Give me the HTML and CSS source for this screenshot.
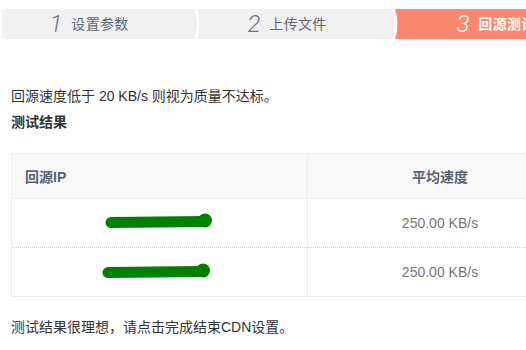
FILE: index.html
```html
<!DOCTYPE html>
<html lang="zh-CN">
<head>
<meta charset="utf-8">
<title>回源测试</title>
<link rel="stylesheet" href="styles.css">
</head>
<body>
<div class="steps">
  <div class="step step-first"><span class="num">1</span><span class="label">设置参数</span></div>
  <svg class="sep" width="6" height="30" viewBox="0 0 6 30" preserveAspectRatio="none"><path d="M0 0 Q6 15 0 30 Z" fill="#f0f0f0"/><path d="M3 0 Q8 15 3 30 L6 30 L6 0 Z" fill="#f0f0f0"/></svg>
  <div class="step"><span class="num">2</span><span class="label">上传文件</span></div>
  <svg class="sep" width="6" height="30" viewBox="0 0 6 30" preserveAspectRatio="none"><path d="M0 0 Q6 15 0 30 Z" fill="#f0f0f0"/><path d="M3 0 Q8 15 3 30 L6 30 L6 0 Z" fill="#f9886f"/></svg>
  <div class="step step-active"><span class="num">3</span><span class="label">回源测试</span></div>
</div>

<div class="content">
  <p class="note">回源速度低于 20 KB/s 则视为质量不达标。</p>
  <h3 class="title">测试结果</h3>
  <table class="result">
    <thead>
      <tr><th class="col-ip">回源IP</th><th class="col-speed">平均速度</th><th class="col-more"></th></tr>
    </thead>
    <tbody>
      <tr class="row-first">
        <td class="cell-ip"><svg class="mask" width="110" height="16" viewBox="0 0 110 16"><path d="M6 9.5 L100 8.5" stroke="#008000" stroke-width="11" stroke-linecap="round"/><circle cx="100" cy="7.5" r="7" fill="#008000"/></svg></td>
        <td class="cell-speed">250.00 KB/s</td><td class="cell-more"></td>
      </tr>
      <tr>
        <td class="cell-ip"><svg class="mask mask-2" width="110" height="16" viewBox="0 0 110 16"><path d="M6 9.5 L100 8.5" stroke="#008000" stroke-width="11" stroke-linecap="round"/><circle cx="101" cy="7.5" r="7" fill="#008000"/></svg></td>
        <td class="cell-speed">250.00 KB/s</td><td class="cell-more"></td>
      </tr>
    </tbody>
  </table>
  <p class="done">测试结果很理想，请点击完成结束<span class="cdn">CDN</span>设置。</p>
</div>
</body>
</html>
```

FILE: styles.css
```css
html, body {
  margin: 0;
  padding: 0;
  overflow: hidden;
  background: #fff;
}

body {
  width: 526px;
  font-family: "Liberation Sans", "Noto Sans CJK SC", sans-serif;
  font-size: 14px;
  color: #333;
}

.steps {
  display: flex;
  width: 640px;
  height: 30px;
  margin: 9px 0 0 2px;
}

.step {
  flex: 0 0 192px;
  height: 30px;
  background: #f0f0f0;
  display: flex;
  align-items: center;
  justify-content: center;
  padding-right: 18px;
  box-sizing: border-box;
  color: #5f6775;
}

.step-first {
  border-radius: 3px 0 0 3px;
}

.step-active {
  flex: 0 0 214px;
  background: #f9886f;
  color: #fff;
}

.sep {
  flex: 0 0 6px;
  display: block;
}

.num {
  font-family: "Roboto", "Liberation Sans", sans-serif;
  font-style: italic;
  font-weight: 300;
  font-size: 24px;
  line-height: 30px;
  margin-right: 9px;
  color: #6d7584;
}

.step-active .num {
  color: #fff;
}

.label {
  font-size: 14px;
  line-height: 30px;
  letter-spacing: 0.3px;
}

.step-active .label {
  font-weight: bold;
}

.content {
  padding-left: 11px;
}

.note {
  margin: 47px 0 0;
  line-height: 20px;
}

.title {
  margin: 6px 0 0;
  font-size: 14px;
  font-weight: bold;
  line-height: 20px;
  color: #333;
}

.result {
  width: 680px;
  margin-top: 21px;
  border-collapse: collapse;
  border: 1px solid #eeeeee;
  table-layout: fixed;
}

.result th {
  height: 44px;
  padding: 0;
  background: #f8f8f8;
  font-weight: bold;
  color: #5b6371;
  border-bottom: 1px solid #eeeeee;
}

.col-ip {
  width: 296px;
  text-align: left;
  padding-left: 13px !important;
  box-sizing: border-box;
  border-right: 1px solid #eeeeee;
}

.col-speed {
  width: 264px;
  text-align: center;
}

.col-more {
  width: 120px;
}

.result td {
  height: 48px;
  padding: 0;
  vertical-align: middle;
}

.row-first td {
  border-bottom: 1px dotted #cccccc;
}

.cell-ip {
  text-align: center;
  border-right: 1px solid #eeeeee;
}

.cell-speed {
  text-align: center;
  color: #777;
}

.mask {
  display: block;
  margin: 0 auto;
  position: relative;
  top: -2px;
}

.mask-2 {
  margin: 0 auto;
  position: relative;
  left: -3px;
  top: -1px;
}

.done {
  margin: 20px 0 0;
  line-height: 20px;
}
```
